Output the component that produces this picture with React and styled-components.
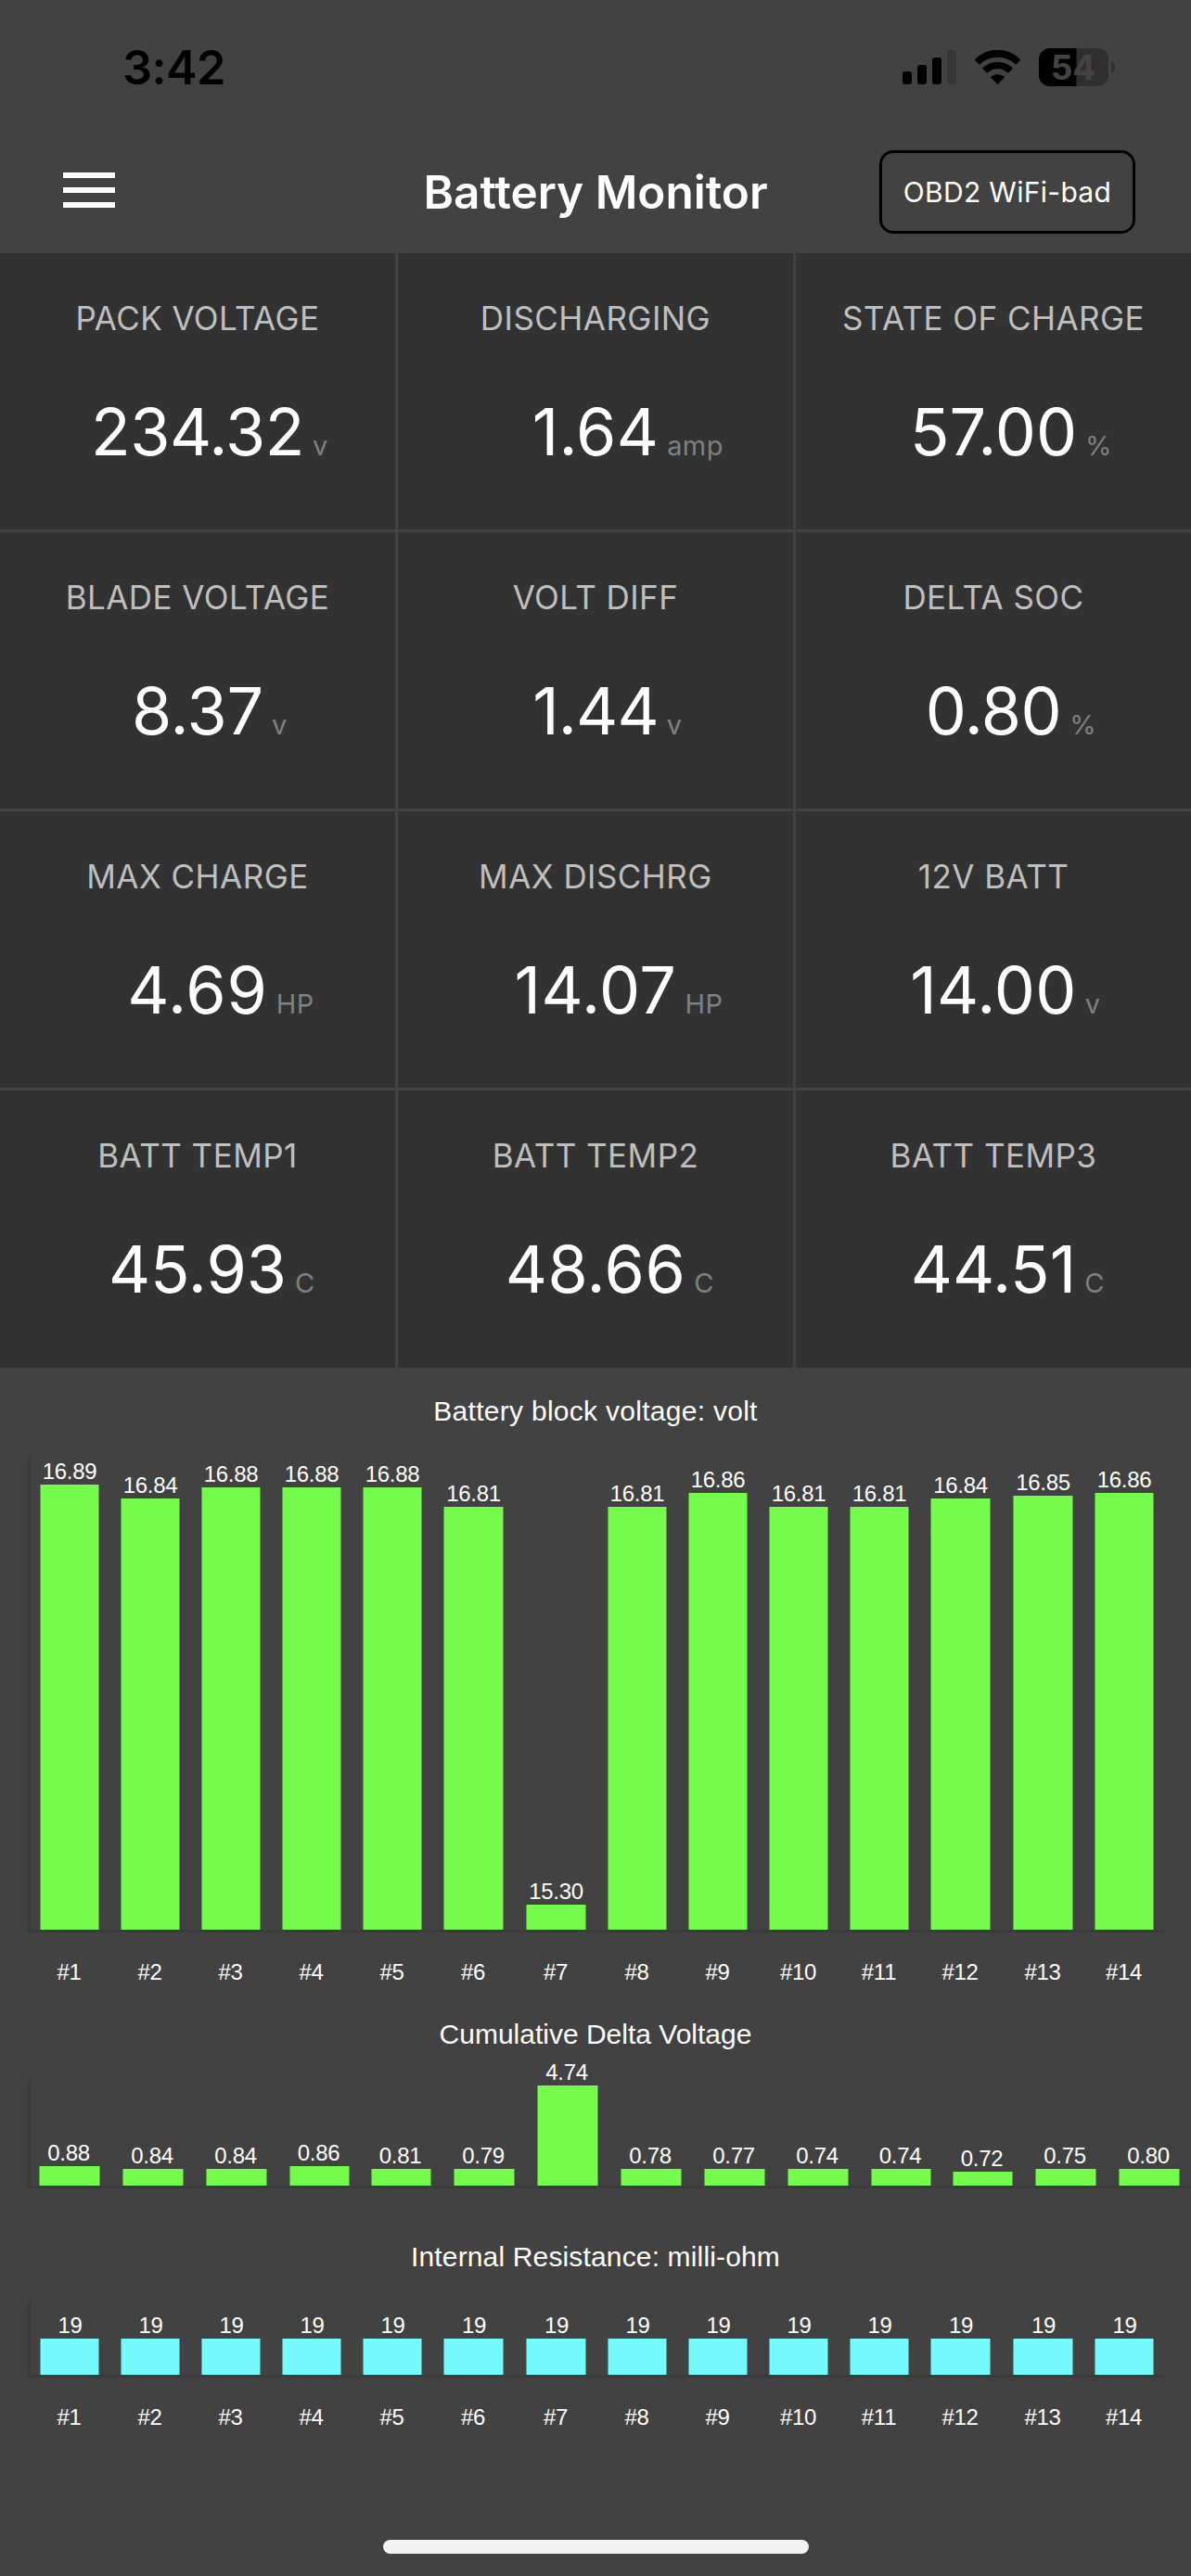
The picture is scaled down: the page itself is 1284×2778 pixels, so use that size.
import React from 'react'
import styled, { createGlobalStyle } from 'styled-components'

const colors = {
  background: '#424242',
  cell: '#323232',
  axis: '#3b3b3b',
  label: '#bfbfbf',
  unit: '#808080',
  green: '#75fb4c',
  cyan: '#75fbfd',
}

const readings = [
  { label: 'PACK VOLTAGE', value: '234.32', unit: 'v', tracking: -0.5 },
  { label: 'DISCHARGING', value: '1.64', unit: 'amp', tracking: 0.2 },
  { label: 'STATE OF CHARGE', value: '57.00', unit: '%' },
  { label: 'BLADE VOLTAGE', value: '8.37', unit: 'v', tracking: -0.25 },
  { label: 'VOLT DIFF', value: '1.44', unit: 'v', tracking: -0.9 },
  { label: 'DELTA SOC', value: '0.80', unit: '%', tracking: -0.5 },
  { label: 'MAX CHARGE', value: '4.69', unit: 'HP', tracking: 0.9 },
  { label: 'MAX DISCHRG', value: '14.07', unit: 'HP', tracking: 0.6 },
  { label: '12V BATT', value: '14.00', unit: 'v', tracking: 0.3 },
  { label: 'BATT TEMP1', value: '45.93', unit: 'C' },
  { label: 'BATT TEMP2', value: '48.66', unit: 'C', tracking: 0.5 },
  { label: 'BATT TEMP3', value: '44.51', unit: 'C' },
]

// [left edge, width] of each bar
const blockBars = [
  [43.5, 63], [130.5, 63], [217.5, 63], [304.5, 63], [391.5, 63], [478.5, 64], [567.5, 64],
  [655.5, 63], [742.5, 63], [829.5, 63], [916.5, 63], [1003.5, 64], [1092.5, 64], [1180.5, 63],
]
const deltaBars = [
  [42.5, 65], [132.5, 65], [222.5, 65], [312.5, 64], [400.5, 64], [489.5, 65], [579.5, 65],
  [669.5, 65], [759.5, 65], [849.5, 65], [939.5, 64], [1027.5, 64], [1116.5, 65], [1206.5, 65],
]

const blockVolts = [
  16.89, 16.84, 16.88, 16.88, 16.88, 16.81, 15.3, 16.81, 16.86, 16.81, 16.81, 16.84, 16.85, 16.86,
]
const deltaVolts = [
  0.88, 0.84, 0.84, 0.86, 0.81, 0.79, 4.74, 0.78, 0.77, 0.74, 0.74, 0.72, 0.75, 0.8,
]
const resistance = Array(14).fill(19)

const GlobalStyle = createGlobalStyle`
  * {
    box-sizing: border-box;
  }
  body {
    margin: 0;
    background: ${colors.background};
    font-family: Inter, 'Liberation Sans', sans-serif;
    color: #fff;
  }
`

const Screen = styled.div`
  display: flex;
  flex-direction: column;
  width: 1284px;
  height: 2778px;
  overflow: hidden;
  background: ${colors.background};

  > * {
    flex-shrink: 0;
  }
`

const StyledStatusBar = styled.div`
  display: flex;
  align-items: center;
  justify-content: space-between;
  height: 145px;
  padding: 0 82px 0 132px;
  color: #000;

  .time {
    font-size: 50.5px;
    font-weight: 600;
    line-height: 62px;
    letter-spacing: -0.6px;
  }
  .icons {
    display: flex;
    align-items: center;
    gap: 19px;
  }
  svg {
    display: block;
  }
`

const StyledHeader = styled.header`
  display: grid;
  grid-template-columns: 1fr auto 1fr;
  align-items: center;
  height: 128px;
  padding: 0 60px 4px;

  h1 {
    margin: 0;
    font-size: 49.5px;
    font-weight: 600;
    line-height: 60px;
  }
`

const MenuButton = styled.button`
  display: flex;
  flex-direction: column;
  gap: 10px;
  width: 56px;
  margin: 0 0 4px 8px;
  padding: 0;
  border: 0;
  background: none;

  span {
    height: 6px;
    background: #fff;
  }
`

const AdapterButton = styled.button`
  justify-self: end;
  width: 276px;
  height: 90px;
  padding: 0;
  border: 3px solid #000;
  border-radius: 15px;
  background: none;
  color: #fff;
  font-family: inherit;
  font-size: 30px;
  letter-spacing: 0.3px;
`

const ReadingGrid = styled.section`
  display: grid;
  grid-template-columns: repeat(3, 426px);
  grid-template-rows: repeat(3, 298px) 299px;
  gap: 3px;
`

const StyledReading = styled.div`
  display: flex;
  flex-direction: column;
  gap: 60px;
  padding-top: 49px;
  background: ${colors.cell};

  .label {
    color: ${colors.label};
    font-size: 35px;
    line-height: 42px;
    letter-spacing: 0.45px;
    text-align: center;
  }
  // the value stays centred, the unit hangs off its right side
  .reading {
    display: grid;
    grid-template-columns: 1fr auto 1fr;
    align-items: baseline;
    line-height: 84px;
  }
  .value {
    grid-column: 2;
    font-size: 70px;
    letter-spacing: ${(p) => p.$tracking}px;
  }
  .unit {
    padding-left: 9px;
    color: ${colors.unit};
    font-size: 29px;
    line-height: 1;
    letter-spacing: 0.4px;
  }
`

const Charts = styled.main`
  padding-top: 3px;
`

const ChartPanel = styled.section`
  padding-top: 26px;

  h2 {
    margin: 0;
    font-family: 'Liberation Sans', Arial, sans-serif;
    font-size: 30px;
    font-weight: 400;
    line-height: 36px;
    letter-spacing: ${(p) => p.$tracking}px;
    text-align: center;
  }
  svg {
    display: block;
  }
  text {
    fill: #fff;
    font-family: 'Liberation Sans', Arial, sans-serif;
    font-size: 24px;
    letter-spacing: -0.3px;
    text-anchor: middle;
  }
`

const HomeIndicator = styled.div`
  width: 459px;
  height: 15px;
  margin: auto auto 24px;
  border-radius: 8px;
  background: #f2f2f2;
`

const SignalIcon = () => (
  <svg width="58" height="37" viewBox="0 0 58 37">
    <rect x="0" y="23" width="10" height="14" rx="3" />
    <rect x="16" y="16" width="10" height="21" rx="3" />
    <rect x="32" y="8" width="10" height="29" rx="3" />
    <rect x="48" y="0" width="10" height="37" rx="3" fill="#363636" />
  </svg>
)

const WifiIcon = () => (
  <svg width="51" height="37" viewBox="0 0 51 37">
    <path d="M0.6 10.5A34 34 0 0 1 50.4 10.5L45.3 15.8A28.2 28.2 0 0 0 5.7 15.8Z" />
    <path d="M9 19.7A23 23 0 0 1 42 19.7L36.7 25A15.6 15.6 0 0 0 14.3 25Z" />
    <path d="M17.6 29A12.5 12.5 0 0 1 33.4 29L25.5 37Z" />
  </svg>
)

const BatteryIcon = ({ level }) => (
  <svg width="82" height="41" viewBox="0 0 82 41">
    <defs>
      <clipPath id="battery-body">
        <rect width="75" height="41" rx="12" />
      </clipPath>
    </defs>
    <g clipPath="url(#battery-body)">
      <rect width="75" height="41" fill="#2f2f2f" />
      <rect width={(75 * level) / 100} height="41" />
    </g>
    <path d="M78 14.5Q82 16 82 20.5T78 26.5Z" fill="#2f2f2f" />
    <text x="37" y="34.3" textAnchor="middle" fontSize="37" fontWeight="700" fill="#434343">
      {level}
    </text>
  </svg>
)

const StatusBar = () => (
  <StyledStatusBar>
    <span className="time">3:42</span>
    <div className="icons">
      <SignalIcon />
      <WifiIcon />
      <BatteryIcon level={54} />
    </div>
  </StyledStatusBar>
)

const Header = () => (
  <StyledHeader>
    <MenuButton aria-label="Menu">
      <span />
      <span />
      <span />
    </MenuButton>
    <h1>Battery Monitor</h1>
    <AdapterButton>OBD2 WiFi-bad</AdapterButton>
  </StyledHeader>
)

const Reading = ({ label, value, unit, tracking = 0 }) => (
  <StyledReading $tracking={tracking}>
    <div className="label">{label}</div>
    <div className="reading">
      <span className="value">{value}</span>
      <span className="unit">{unit}</span>
    </div>
  </StyledReading>
)

const AXIS_TOP = 31

const BarChart = ({
  title,
  tracking = 0,
  height,
  axisY,
  axisEnd = 1255,
  values,
  bars = blockBars,
  base = 0,
  scale,
  digits = 2,
  color = colors.green,
  ticks,
  labelShift = 0,
}) => (
  <ChartPanel $tracking={tracking}>
    <h2>{title}</h2>
    <svg width="1284" height={height} viewBox={`0 0 1284 ${height}`}>
      <rect x="30" y={AXIS_TOP} width="3" height={axisY - AXIS_TOP + 3} fill={colors.axis} />
      <rect x="33" y={axisY} width={axisEnd - 33} height="3" fill={colors.axis} />
      {values.map((value, i) => {
        const [x, width] = bars[i]
        const center = x + width / 2
        // bar heights land on whole points (3 device pixels)
        const h = Math.round(((value - base) * scale) / 3) * 3
        return (
          <g key={i}>
            <rect x={x} y={axisY - h} width={width} height={h} fill={color} />
            <text x={center + labelShift} y={axisY - h - 6}>
              {value.toFixed(digits)}
            </text>
            {ticks && (
              <text x={center - 0.5} y={axisY + 54}>
                {`#${i + 1}`}
              </text>
            )}
          </g>
        )
      })}
    </svg>
  </ChartPanel>
)

const App = () => (
  <>
    <GlobalStyle />
    <Screen>
      <StatusBar />
      <Header />
      <ReadingGrid>
        {readings.map((reading) => (
          <Reading key={reading.label} {...reading} />
        ))}
      </ReadingGrid>
      <Charts>
        <BarChart
          title="Battery block voltage: volt"
          tracking={0.28}
          height={610}
          axisY={541}
          values={blockVolts}
          base={15.21}
          scale={285}
          ticks
        />
        <BarChart
          title="Cumulative Delta Voltage"
          height={178}
          axisY={145}
          axisEnd={1284}
          values={deltaVolts}
          bars={deltaBars}
          scale={22.8}
          labelShift={-1}
        />
        <BarChart
          title="Internal Resistance: milli-ohm"
          tracking={0.15}
          height={198}
          axisY={109}
          values={resistance}
          scale={2.05}
          digits={0}
          color={colors.cyan}
          labelShift={0.5}
          ticks
        />
      </Charts>
      <HomeIndicator />
    </Screen>
  </>
)

export default App
